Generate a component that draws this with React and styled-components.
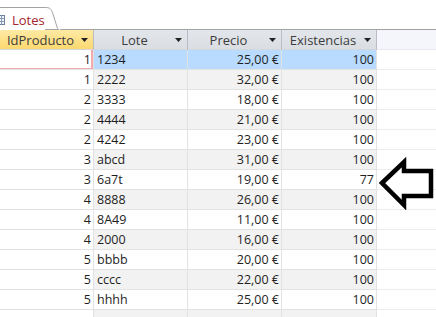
import styled, { createGlobalStyle } from "styled-components";

const GlobalStyle = createGlobalStyle`
  html, body {
    margin: 0;
    padding: 0;
    background: #ffffff;
  }
  body {
    font-family: "Open Sans", "Noto Sans", "DejaVu Sans", sans-serif;
  }
`;

const Page = styled.div`
  position: relative;
  width: 436px;
  height: 317px;
  overflow: hidden;
  background: #ffffff;
`;

const TabStrip = styled.div`
  display: flex;
  align-items: flex-end;
  height: 29px;
  border-bottom: 1px solid #a3a3a3;
`;

const Tab = styled.div`
  display: flex;
  align-items: center;
  height: 23px;
  margin-left: -6px;
  margin-bottom: -1px;
`;

const TabBody = styled.div`
  display: flex;
  align-items: center;
  gap: 7px;
  height: 23px;
  box-sizing: border-box;
  padding-top: 1px;
  border-top: 1px solid #a3a3a3;
  background: #ffffff;
  color: #a4262c;
  font-size: 13px;
`;

const TabEdge = styled.svg`
  display: block;
  width: 16px;
  height: 24px;
  margin-top: 1px;
`;

const Sheet = styled.div`
  display: flex;
  flex-direction: column;
`;

const Row = styled.div`
  display: grid;
  grid-template-columns: 94px 94px 94px 95px 1fr;
  height: 20px;
  background: ${(p) => (p.$alt ? "#f2f2f2" : "#ffffff")};
`;

const HeaderCell = styled.div`
  display: flex;
  align-items: center;
  box-sizing: border-box;
  padding: 0 5px 0 0;
  border-right: 1px solid #b9bdc3;
  border-bottom: 1px solid #d3d6da;
  background: ${(p) =>
    p.$active
      ? "linear-gradient(#fdeaa4, #fcd870)"
      : "linear-gradient(#e3e6ea, #dadee3)"};
  color: #3c3c3c;
  font-size: 13px;
`;

const HeaderLabel = styled.span`
  flex: 1;
  text-align: center;
  white-space: nowrap;
`;

const HeaderFill = styled.div`
  background: #f4f6fc;
  border-bottom: 1px solid #e6e8ee;
`;

const Cell = styled.div`
  box-sizing: border-box;
  padding: 0 2px 0 3px;
  border-right: 1px solid #e2e2e2;
  border-bottom: 1px solid #e2e2e2;
  background: ${(p) => (p.$selected ? "#b8dbff" : "transparent")};
  color: #1e1e1e;
  font-size: 12.5px;
  line-height: 19px;
  text-align: ${(p) => (p.$num ? "right" : "left")};
  white-space: nowrap;
  overflow: hidden;
`;

const KeyCell = styled(Cell)`
  background: #ffffff;
  box-shadow: ${(p) => (p.$current ? "inset -2px -1px 0 #f4a9ad" : "none")};
`;

const Fill = styled.div`
  background: #ffffff;
  border-bottom: 1px solid #ececec;
`;

const Pointer = styled.svg`
  position: absolute;
  left: 376px;
  top: 156px;
  width: 60px;
  height: 54px;
`;

const rows = [
  [1, "1234", "25,00 €", 100],
  [1, "2222", "32,00 €", 100],
  [2, "3333", "18,00 €", 100],
  [2, "4444", "21,00 €", 100],
  [2, "4242", "23,00 €", 100],
  [3, "abcd", "31,00 €", 100],
  [3, "6a7t", "19,00 €", 77],
  [4, "8888", "26,00 €", 100],
  [4, "8A49", "11,00 €", 100],
  [4, "2000", "16,00 €", 100],
  [5, "bbbb", "20,00 €", 100],
  [5, "cccc", "22,00 €", 100],
  [5, "hhhh", "25,00 €", 100],
  ["", "", "", ""],
];

const SortArrow = () => (
  <svg width="7" height="4" viewBox="0 0 7 4">
    <path d="M0 0h7L3.5 4z" fill="#222" />
  </svg>
);

const TableIcon = () => (
  <svg width="11" height="10" viewBox="0 0 11 10">
    <rect x="0.5" y="0.5" width="10" height="9" fill="#eef3fa" stroke="#6d7f99" />
    <path d="M0.5 3.5h10M0.5 6.5h10M4 0.5v9M7.5 0.5v9" stroke="#8a9bb3" />
  </svg>
);

const headers = ["IdProducto", "Lote", "Precio", "Existencias"];

export default function App() {
  return (
    <Page>
      <GlobalStyle />
      <TabStrip>
        <Tab>
          <TabBody>
            <TableIcon />
            <span>Lotes</span>
          </TabBody>
          <TabEdge viewBox="0 0 16 24">
            <path
              d="M0 0.5 C5 0.5 6 1.5 8 7 L12 20 C13 22.5 14 23.5 16 23.5"
              fill="#ffffff"
              stroke="#a3a3a3"
            />
          </TabEdge>
        </Tab>
      </TabStrip>
      <Sheet>
        <Row>
          {headers.map((h, i) => (
            <HeaderCell key={h} $active={i === 0}>
              <HeaderLabel>{h}</HeaderLabel>
              <SortArrow />
            </HeaderCell>
          ))}
          <HeaderFill />
        </Row>
        {rows.map((r, i) => (
          <Row key={i} $alt={i % 2 === 1}>
            <KeyCell $num $current={i === 0}>
              {r[0]}
            </KeyCell>
            <Cell $selected={i === 0}>{r[1]}</Cell>
            <Cell $num $selected={i === 0}>
              {r[2]}
            </Cell>
            <Cell $num $selected={i === 0}>
              {r[3]}
            </Cell>
            <Fill />
          </Row>
        ))}
      </Sheet>
      <Pointer viewBox="376 156 60 54">
        <path
          d="M382 183 L404 162 L404 171 L431 171 L431 196 L404 196 L404 205 Z"
          fill="#ffffff"
          stroke="#000000"
          strokeWidth="4.5"
          strokeLinejoin="miter"
        />
      </Pointer>
    </Page>
  );
}
